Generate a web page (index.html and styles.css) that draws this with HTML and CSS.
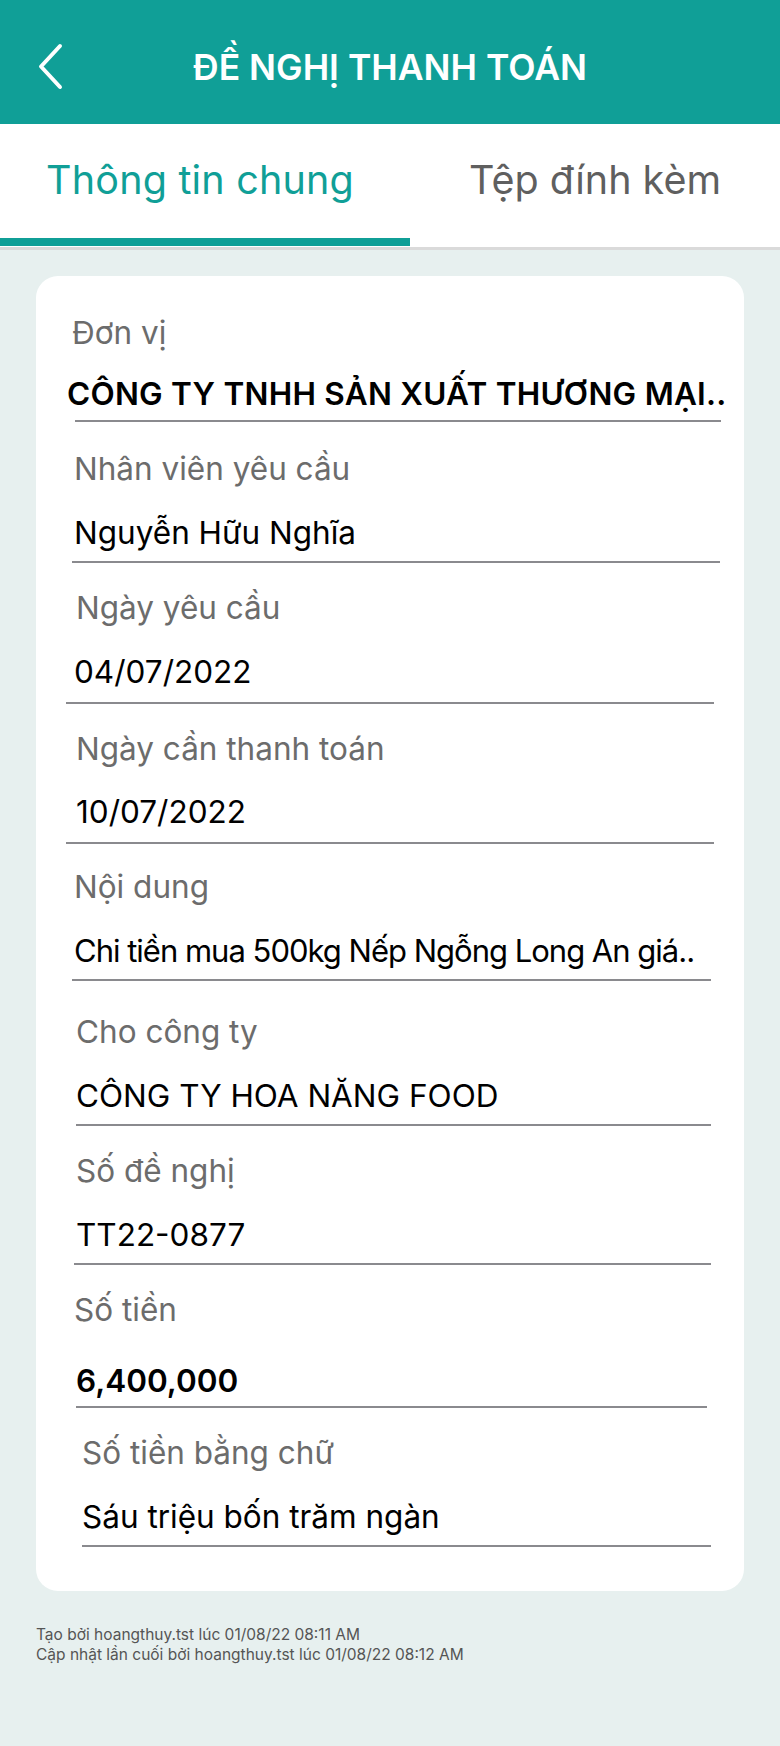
FILE: index.html
```html
<!DOCTYPE html>
<html lang="vi">
<head>
<meta charset="utf-8">
<title>Đề nghị thanh toán</title>
<link rel="stylesheet" href="styles.css">
</head>
<body>
<div class="screen">
  <header class="topbar">
    <div class="topbar-left">
      <svg class="back" width="30" height="50" viewBox="0 0 30 50" aria-hidden="true">
        <path d="M22 3 L3 23.5 L22 44" fill="none" stroke="#fff" stroke-width="4" stroke-linecap="round" stroke-linejoin="round"/>
      </svg>
    </div>
    <h1 class="title">ĐỀ NGHỊ THANH TOÁN</h1>
    <div class="topbar-right"></div>
  </header>

  <nav class="tabs">
    <div class="tab tab--active">
      <span class="tab-text">Thông tin chung</span>
      <span class="tab-indicator"></span>
    </div>
    <div class="tab">
      <span class="tab-text">Tệp đính kèm</span>
      <span class="tab-indicator tab-indicator--off"></span>
    </div>
  </nav>

  <main class="content">
    <section class="card">
      <div class="field f1">
        <div class="field-label">Đơn vị</div>
        <div class="field-value"><span class="value-text bold">CÔNG TY TNHH SẢN XUẤT THƯƠNG MẠI..</span></div>
      </div>
      <div class="field f2">
        <div class="field-label">Nhân viên yêu cầu</div>
        <div class="field-value"><span class="value-text">Nguyễn Hữu Nghĩa</span></div>
      </div>
      <div class="field f3">
        <div class="field-label">Ngày yêu cầu</div>
        <div class="field-value"><span class="value-text">04/07/2022</span></div>
      </div>
      <div class="field f4">
        <div class="field-label">Ngày cần thanh toán</div>
        <div class="field-value"><span class="value-text">10/07/2022</span></div>
      </div>
      <div class="field f5">
        <div class="field-label">Nội dung</div>
        <div class="field-value"><span class="value-text">Chi tiền mua 500kg Nếp Ngỗng Long An giá..</span></div>
      </div>
      <div class="field f6">
        <div class="field-label">Cho công ty</div>
        <div class="field-value"><span class="value-text">CÔNG TY HOA NĂNG FOOD</span></div>
      </div>
      <div class="field f7">
        <div class="field-label">Số đề nghị</div>
        <div class="field-value"><span class="value-text">TT22-0877</span></div>
      </div>
      <div class="field f8">
        <div class="field-label">Số tiền</div>
        <div class="field-value"><span class="value-text bold">6,400,000</span></div>
      </div>
      <div class="field f9">
        <div class="field-label">Số tiền bằng chữ</div>
        <div class="field-value"><span class="value-text">Sáu triệu bốn trăm ngàn</span></div>
      </div>
    </section>

    <footer class="meta">
      <div>Tạo bởi hoangthuy.tst lúc 01/08/22 08:11 AM</div>
      <div>Cập nhật lần cuối bởi hoangthuy.tst lúc 01/08/22 08:12 AM</div>
    </footer>
  </main>
</div>
</body>
</html>
```

FILE: styles.css
```css
* { box-sizing: border-box; }

html, body {
  margin: 0;
  padding: 0;
}

body {
  font-family: Inter, "Noto Sans", "DejaVu Sans", sans-serif;
  background: #e7f0ef;
  width: 780px;
  min-height: 1746px;
}

.screen {
  display: flex;
  flex-direction: column;
  min-height: 1746px;
  background: #e7f0ef;
}

/* ---------- top bar ---------- */
.topbar {
  height: 124px;
  padding-top: 11px;
  background: #109f97;
  display: grid;
  grid-template-columns: 1fr auto 1fr;
  align-items: center;
}

.topbar-left {
  padding-left: 38px;
  display: flex;
  align-items: center;
}

.back { display: block; }

.title {
  margin: 0;
  color: #fff;
  font-size: 35.5px;
  line-height: 40px;
  font-weight: 600;
  letter-spacing: 0;
}

/* ---------- tabs ---------- */
.tabs {
  display: grid;
  grid-template-columns: 410px 1fr;
  background: #fff;
  border-bottom: 3px solid #dadada;
}

.tab {
  display: flex;
  flex-direction: column;
  align-items: center;
  padding-top: 31px;
}

.tab-text {
  font-size: 39.5px;
  line-height: 50px;
  color: #5f5f5f;
  white-space: nowrap;
}

.tab--active .tab-text {
  color: #109f97;
  margin-right: 10px;
  letter-spacing: 0.2px;
}

.tab-indicator {
  align-self: stretch;
  height: 8px;
  margin-top: 33px;
  margin-bottom: 1px;
  background: #109f97;
}

.tab-indicator--off { background: transparent; }

/* ---------- content ---------- */
.content {
  padding: 26px 36px 0;
}

.card {
  background: #fff;
  border-radius: 22px;
  padding: 39px 0 44px;
}

.field {
  margin: 27px 33px 0 38px;
}

.field:first-child { margin-top: 0; }

.field-label {
  font-size: 31.5px;
  line-height: 36px;
  color: #6c6c6c;
  white-space: nowrap;
}

.field-value {
  margin-top: 28px;
  padding-bottom: 10px;
  border-bottom: 2px solid #8a8a8e;
}

.value-text {
  display: block;
  font-size: 31.5px;
  line-height: 36px;
  color: #000;
  white-space: nowrap;
}

.value-text.bold { font-weight: 600; }

/* per-field fine offsets */
.f1 { margin-left: 39px; margin-right: 23px; }
.f1 .field-label { margin-left: -3px; }
.f1 .field-value { margin-top: 25px; padding-bottom: 8px; }
.f1 .value-text { margin-left: -8px; letter-spacing: 0.25px; }

.f2 { margin-top: 29px; margin-left: 36px; margin-right: 24px; }
.f2 .field-label,
.f2 .value-text { padding-left: 2px; }

.f3 { margin-left: 30px; margin-right: 30px; }
.f3 .field-label { padding-left: 10px; }
.f3 .value-text { padding-left: 8px; }
.f3 .field-value { padding-bottom: 12px; }

.f4 { margin-left: 30px; margin-right: 30px; }
.f4 .field-label,
.f4 .value-text { padding-left: 10px; }
.f4 .field-value { margin-top: 27px; padding-bottom: 12px; }

.f5 { margin-top: 25px; margin-left: 36px; }
.f5 .field-label,
.f5 .value-text { padding-left: 2px; }
.f5 .value-text { font-size: 31px; letter-spacing: -1px; }

.f6 { margin-top: 33px; margin-left: 40px; }

.f7 { margin-left: 38px; }
.f7 .field-label,
.f7 .value-text { padding-left: 2px; }

.f8 { margin-top: 27px; margin-left: 40px; margin-right: 37px; }
.f8 .field-label { margin-left: -2px; }
.f8 .field-value { margin-top: 35px; padding-bottom: 7px; }

.f9 { margin-left: 46px; }

/* ---------- footer meta ---------- */
.meta {
  margin-top: 34px;
  font-size: 15.5px;
  line-height: 20px;
  color: #555;
}
```
